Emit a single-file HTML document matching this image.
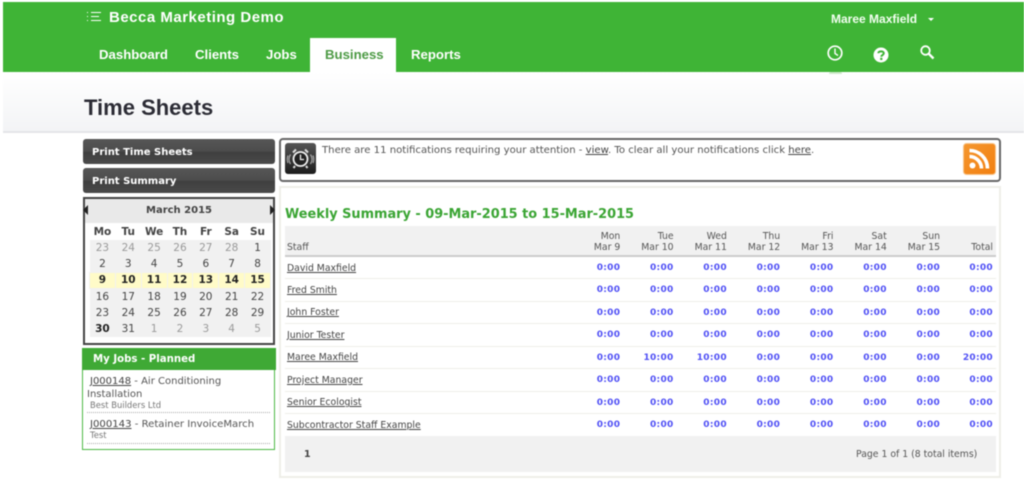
<!DOCTYPE html>
<html><head><meta charset="utf-8"><title>Time Sheets</title>
<style>
html,body{margin:0;padding:0;background:#fff}
#p{position:relative;width:1024px;height:490px;overflow:hidden;background:#fff;font-family:"DejaVu Sans",sans-serif;font-size:9.5px;color:#444;filter:blur(.45px)}
#p div,#p span.a,#p svg{position:absolute}
.n{top:47px;font:bold 13.2px "Liberation Sans",sans-serif;color:#fff;white-space:nowrap}
a{color:#444;text-decoration:underline}
.btn{left:83px;width:192px;height:25px;border-radius:3px;background:linear-gradient(#565656 0,#4c4c4c 50%,#3f3f3f 52%,#4a4a4a 100%);color:#fff;font-weight:bold;font-size:10px;line-height:27px;text-indent:9px;white-space:nowrap}
#cal{left:83px;top:197px;width:188px;height:144px;border:2px solid #444;background:#fff}
table{border-collapse:collapse}
#ct{position:absolute;left:4px;top:24px;width:182px;table-layout:fixed;font-size:10.5px;text-align:center}
#ct th{height:17px;padding:0;color:#444;font-size:10.5px}
#ct td{height:16.2px;box-sizing:border-box;padding:0;background:#f1f1f1;color:#444}
#ct td.o{color:#999}
#ct td.w{font-weight:bold;color:#222;background:#fffbc8;border:1px solid #f1f1f1;border-width:1px 1.5px}
#st{position:absolute;left:285px;top:226px;width:711px;table-layout:fixed;font-size:9.3px}
#st th{font-weight:normal;background:#f1f1f1;text-align:right;vertical-align:bottom;padding:0 3px 2px 0;height:27px;line-height:11px;color:#555;border-bottom:2px solid #ccc;white-space:nowrap}
#st th:first-child{text-align:left;padding-left:2px}
#st td{height:21.6px;padding:1px 3px 0 0;box-sizing:border-box;height:22.5px;border-bottom:1px solid #eeeee8;text-align:right;color:#5050f5;font-weight:bold;font-size:9px;letter-spacing:.3px}
#st td:first-child{text-align:left;padding-left:2px;font-weight:normal;font-size:9.3px;letter-spacing:0;white-space:nowrap}
</style></head><body>
<div id="p">
<div style="left:3px;top:2px;width:1021px;height:70px;background:#3fb436"></div>
<svg style="left:86px;top:11px" width="16" height="12" viewBox="0 0 16 12" fill="none" stroke="#fff" stroke-width="1"><path d="M1 1.500h1M1 5.500h1M1 9.500h1M5 1.500h10M5 5.500h8M5 9.500h10"/></svg>
<div style="left:109px;top:9px;font:bold 15px 'Liberation Sans',sans-serif;color:#fff;letter-spacing:.5px;white-space:nowrap">Becca Marketing Demo</div>
<div style="left:831px;top:12px;font:bold 12px 'Liberation Sans',sans-serif;color:#f2fff0;white-space:nowrap">Maree Maxfield</div>
<div style="left:928px;top:18px;width:0;height:0;border:3px solid transparent;border-top:3px solid #fff"></div>
<div style="left:310px;top:38px;width:86px;height:34px;background:#fff"></div>
<div class="n" style="left:99px">Dashboard</div>
<div class="n" style="left:195px">Clients</div>
<div class="n" style="left:266px">Jobs</div>
<div class="n" style="left:325px;color:#4c9a44">Business</div>
<div class="n" style="left:411px">Reports</div>
<svg style="left:826px;top:44px" width="18" height="18" viewBox="0 0 18 18" fill="none" stroke="#fff"><circle cx="9" cy="9" r="6.800" stroke-width="1.700"/><path d="M9 4.500V9.500L12 11.500" stroke-width="1.400"/></svg>
<svg style="left:872px;top:46px" width="18" height="18" viewBox="0 0 18 18"><circle cx="9" cy="9" r="7.500" fill="#fff"/><path d="M6.300 7.200C6.500 4.700 11.800 4.700 11.800 7.300C11.800 9 9.300 9 9.300 10.800" fill="none" stroke="#3fb436" stroke-width="2"/><rect x="8.200" y="11.800" width="2.200" height="2.200" fill="#3fb436"/></svg>
<svg style="left:919px;top:44px" width="16" height="16" viewBox="0 0 16 16" fill="none" stroke="#fff"><circle cx="6.500" cy="6.500" r="4.300" stroke-width="1.800"/><path d="M9.700 9.700L14.500 14.500" stroke-width="2.400"/></svg>
<div style="left:3px;top:72px;width:1021px;height:59px;background:linear-gradient(#fff,#f3f4f6)"></div>
<div style="left:829px;top:72px;width:13px;height:1.500px;border-radius:6px 6px 0 0;background:#cfe9cc"></div>
<div style="left:3px;top:131px;width:1021px;height:2px;background:#e4e5e8"></div>
<div style="left:84px;top:95px;font:bold 22px 'Liberation Sans',sans-serif;color:#2c2c35;white-space:nowrap">Time Sheets</div>

<div class="btn" style="top:139px">Print Time Sheets</div>
<div class="btn" style="top:168px">Print Summary</div>

<div id="cal">
<div style="left:0;top:0;width:188px;height:24px;background:#e9e9e9;text-align:center;font-weight:bold;font-size:10px;line-height:23px;color:#444">March 2015</div>
<div style="left:-2px;top:6px;width:0;height:0;border:5px solid transparent;border-left:0;border-right:5px solid #222"></div>
<div style="right:-2px;top:6px;width:0;height:0;border:5px solid transparent;border-right:0;border-left:5px solid #222"></div>
<table id="ct"><tr><th>Mo</th><th>Tu</th><th>We</th><th>Th</th><th>Fr</th><th>Sa</th><th>Su</th></tr>
<tr><td class="o">23</td><td class="o">24</td><td class="o">25</td><td class="o">26</td><td class="o">27</td><td class="o">28</td><td>1</td></tr>
<tr><td>2</td><td>3</td><td>4</td><td>5</td><td>6</td><td>7</td><td>8</td></tr>
<tr><td class="w">9</td><td class="w">10</td><td class="w">11</td><td class="w">12</td><td class="w">13</td><td class="w">14</td><td class="w">15</td></tr>
<tr><td>16</td><td>17</td><td>18</td><td>19</td><td>20</td><td>21</td><td>22</td></tr>
<tr><td>23</td><td>24</td><td>25</td><td>26</td><td>27</td><td>28</td><td>29</td></tr>
<tr><td><b style="color:#222">30</b></td><td>31</td><td class="o">1</td><td class="o">2</td><td class="o">3</td><td class="o">4</td><td class="o">5</td></tr></table>
</div>

<div style="left:82px;top:348px;width:191px;height:100px;border:1px solid #4cb845;border-width:1px 1.5px 1.5px"></div>
<div style="left:82px;top:348px;width:194px;height:22px;background:#3fa935;color:#fff;font-weight:bold;font-size:10.2px;line-height:23px;text-indent:11px">My Jobs - Planned</div>
<div style="left:87px;top:376px;width:184px;font-size:10px;line-height:12.500px;color:#555"><span style="margin-left:3px"><a href="#">J000148</a> - Air Conditioning</span><br>Installation</div>
<div style="left:90px;top:400px;font-size:8.400px;color:#777;white-space:nowrap">Best Builders Ltd</div>
<div style="left:87px;top:412px;width:183px;border-top:1px dotted #aaa"></div>
<div style="left:90px;top:419px;font-size:10.100px;color:#555;white-space:nowrap"><a href="#">J000143</a> - Retainer InvoiceMarch</div>
<div style="left:90px;top:430px;font-size:8.400px;color:#777">Test</div>
<div style="left:87px;top:443px;width:183px;border-top:1px dotted #aaa"></div>

<div style="left:279px;top:138px;width:718px;height:40px;border:2px solid #666;border-radius:4px;background:#fff"></div>
<svg style="left:285px;top:143px" width="31" height="31" viewBox="0 0 31 31"><defs><linearGradient id="g" x1="0" y1="0" x2="0" y2="1"><stop offset="0" stop-color="#555"/><stop offset="1" stop-color="#1c1c1c"/></linearGradient></defs><rect width="31" height="31" rx="3" fill="url(#g)"/><circle cx="15.500" cy="16" r="7" fill="#222" stroke="#eee" stroke-width="1.800"/><path d="M15.500 11.500V16.500H19" fill="none" stroke="#eee" stroke-width="1.300"/><path d="M8 9.500L11 6.500M23 9.500L20 6.500M10 23L8.500 25M21 23L22.500 25" stroke="#ddd" stroke-width="2" fill="none"/><path d="M5.500 11.500C3.500 14.500 3.500 18 5.500 21M3 12.500C2 15 2 17.500 3 20M25.500 11.500C27.500 14.500 27.500 18 25.500 21M28 12.500C29 15 29 17.500 28 20" stroke="#aaa" stroke-width="1.200" fill="none"/></svg>
<div style="left:322px;top:143.500px;font-size:10.100px;color:#555;white-space:nowrap;line-height:13px">There are 11 notifications requiring your attention - <a href="#">view</a>. To clear all your notifications click <a href="#">here</a>.</div>
<svg style="left:963px;top:143px" width="33" height="32" viewBox="0 0 33 32"><defs><linearGradient id="r" x1="0" y1="0" x2="1" y2="1"><stop offset="0" stop-color="#f5972f"/><stop offset="1" stop-color="#f27f10"/></linearGradient></defs><rect x=".5" y=".5" width="32" height="31" rx="3" fill="url(#r)" stroke="#f7c48a"/><circle cx="9.500" cy="22.500" r="3" fill="#fff"/><path d="M6.500 13.500C13 13.500 18.500 19 18.500 25.500M6.500 7.500C16.500 7.500 24.500 15.500 24.500 25.500" fill="none" stroke="#fff" stroke-width="3.600"/></svg>

<div style="left:279px;top:186px;width:718px;height:288px;border:2px solid #eeeee8;background:#fff"></div>
<div style="left:285px;top:207px;font-weight:bold;font-size:12.900px;line-height:15px;color:#3ba534;white-space:nowrap">Weekly Summary - 09-Mar-2015 to 15-Mar-2015</div>
<table id="st"><colgroup><col style="width:285px"><col style="width:53.300px"><col style="width:53.300px"><col style="width:53.300px"><col style="width:53.300px"><col style="width:53.300px"><col style="width:53.300px"><col style="width:53.300px"><col></colgroup>
<tr><th>Staff</th><th>Mon<br>Mar 9</th><th>Tue<br>Mar 10</th><th>Wed<br>Mar 11</th><th>Thu<br>Mar 12</th><th>Fri<br>Mar 13</th><th>Sat<br>Mar 14</th><th>Sun<br>Mar 15</th><th>Total</th></tr>
<tr><td><a href="#">David Maxfield</a></td><td>0:00</td><td>0:00</td><td>0:00</td><td>0:00</td><td>0:00</td><td>0:00</td><td>0:00</td><td>0:00</td></tr>
<tr><td><a href="#">Fred Smith</a></td><td>0:00</td><td>0:00</td><td>0:00</td><td>0:00</td><td>0:00</td><td>0:00</td><td>0:00</td><td>0:00</td></tr>
<tr><td><a href="#">John Foster</a></td><td>0:00</td><td>0:00</td><td>0:00</td><td>0:00</td><td>0:00</td><td>0:00</td><td>0:00</td><td>0:00</td></tr>
<tr><td><a href="#">Junior Tester</a></td><td>0:00</td><td>0:00</td><td>0:00</td><td>0:00</td><td>0:00</td><td>0:00</td><td>0:00</td><td>0:00</td></tr>
<tr><td><a href="#">Maree Maxfield</a></td><td>0:00</td><td>10:00</td><td>10:00</td><td>0:00</td><td>0:00</td><td>0:00</td><td>0:00</td><td>20:00</td></tr>
<tr><td><a href="#">Project Manager</a></td><td>0:00</td><td>0:00</td><td>0:00</td><td>0:00</td><td>0:00</td><td>0:00</td><td>0:00</td><td>0:00</td></tr>
<tr><td><a href="#">Senior Ecologist</a></td><td>0:00</td><td>0:00</td><td>0:00</td><td>0:00</td><td>0:00</td><td>0:00</td><td>0:00</td><td>0:00</td></tr>
<tr><td><a href="#">Subcontractor Staff Example</a></td><td>0:00</td><td>0:00</td><td>0:00</td><td>0:00</td><td>0:00</td><td>0:00</td><td>0:00</td><td>0:00</td></tr>
</table>
<div style="left:285px;top:436px;width:711px;height:36px;background:#f1f1f1"></div>
<div style="left:304px;top:449px;font-weight:bold;color:#444">1</div>
<div style="left:856px;top:449px;font-size:9.300px;color:#555;white-space:nowrap">Page 1 of 1 (8 total items)</div>
</div>
</body></html>
